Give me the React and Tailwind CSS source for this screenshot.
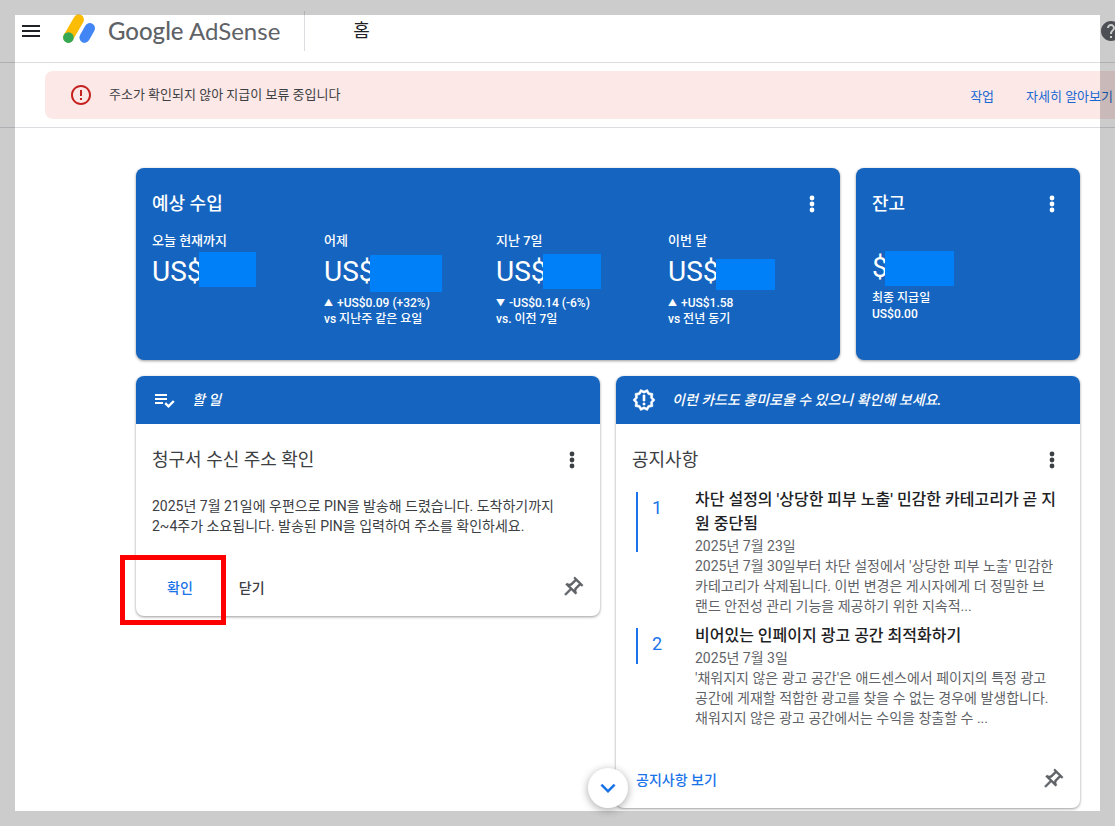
import React from 'react';
import { MdMenu, MdHelp, MdErrorOutline, MdExpandMore } from 'react-icons/md';

const earnings = [
  { label: '오늘 현재까지', mask: 'top-[-4px] left-[47px] w-[57px] h-[35px]' },
  {
    label: '어제',
    mask: 'top-[-1px] left-[46px] w-[72px] h-[37px]',
    arrow: '▲',
    change: '+US$0.09 (+32%)',
    compare: 'vs 지난주 같은 요일',
  },
  {
    label: '지난 7일',
    mask: 'top-[-2px] left-[47px] w-[58px] h-[35px]',
    arrow: '▼',
    change: '-US$0.14 (-6%)',
    compare: 'vs. 이전 7일',
  },
  {
    label: '이번 달',
    mask: 'top-[3px] left-[48px] w-[59px] h-[31px]',
    arrow: '▲',
    change: '+US$1.58',
    compare: 'vs 전년 동기',
  },
];

const notices = [
  {
    title: "차단 설정의 '상당한 피부 노출' 민감한 카테고리가 곧 지원 중단됨",
    date: '2025년 7월 23일',
    body: "2025년 7월 30일부터 차단 설정에서 '상당한 피부 노출' 민감한 카테고리가 삭제됩니다. 이번 변경은 게시자에게 더 정밀한 브랜드 안전성 관리 기능을 제공하기 위한 지속적...",
    bar: 'h-[60px]',
  },
  {
    title: '비어있는 인페이지 광고 공간 최적화하기',
    date: '2025년 7월 3일',
    body: "'채워지지 않은 광고 공간'은 애드센스에서 페이지의 특정 광고 공간에 게재할 적합한 광고를 찾을 수 없는 경우에 발생합니다. 채워지지 않은 광고 공간에서는 수익을 창출할 수 ...",
    bar: 'h-9',
  },
];

const AdSenseMark = () => (
  <svg width="34" height="34" viewBox="0 0 34 34" fill="none" aria-hidden="true">
    <path d="M15.7 5.6L5.4 23.4" stroke="#fbbc04" strokeWidth="10.4" strokeLinecap="round" />
    <path d="M26.8 14.2L21.6 23.6" stroke="#4285f4" strokeWidth="10.4" strokeLinecap="round" />
    <circle cx="5.4" cy="23.6" r="5.3" fill="#34a853" />
  </svg>
);

const ChecklistIcon = () => (
  <svg width="24" height="24" viewBox="0 0 24 24" fill="none" aria-hidden="true">
    <path d="M3 6h12v2H3zM3 10h12v2H3zM3 14h8v2H3z" fill="currentColor" />
    <path d="M13.2 15.2l3.3 3.2 5.3-5.4" stroke="currentColor" strokeWidth="2.4" />
  </svg>
);

const AlertBadgeIcon = () => (
  <svg width="24" height="24" viewBox="0 0 24 24" fill="currentColor" stroke="currentColor" strokeWidth="0.6" aria-hidden="true">
    <path d="M23 12l-2.44-2.78.34-3.68-3.61-.82-1.89-3.18L12 3 8.6 1.54 6.71 4.72l-3.61.81.34 3.68L1 12l2.44 2.78-.34 3.69 3.61.82 1.89 3.18L12 21l3.4 1.46 1.89-3.18 3.61-.82-.34-3.68L23 12zm-4.51 2.11l.26 2.79-2.74.62-1.43 2.41L12 18.82l-2.58 1.11-1.43-2.41-2.74-.62.26-2.8L3.66 12l1.85-2.12-.26-2.78 2.74-.61 1.43-2.41L12 5.18l2.58-1.11 1.43 2.41 2.74.62-.26 2.79L20.34 12l-1.85 2.11zM11 15h2v2h-2zM11 7h2v6h-2z" />
  </svg>
);

const MoreButton = () => (
  <button type="button" aria-label="더보기" className="flex h-6 w-6 items-center justify-center">
    <svg width="24" height="24" viewBox="0 0 24 24" fill="currentColor" aria-hidden="true">
      <circle cx="12" cy="6" r="2.4" />
      <circle cx="12" cy="12" r="2.4" />
      <circle cx="12" cy="18" r="2.4" />
    </svg>
  </button>
);

const PinButton = () => (
  <button type="button" aria-label="고정" className="flex h-6 w-6 items-center justify-center text-[#5f6368]">
    <svg width="24" height="24" viewBox="0 0 24 24" fill="currentColor" stroke="currentColor" strokeWidth="0.5" aria-hidden="true">
      <path
        transform="rotate(45 12 12)"
        d="M14 4v5c0 1.12.37 2.16 1 3H9c.65-.86 1-1.9 1-3V4h4m3-2H7c-.55 0-1 .45-1 1s.45 1 1 1h1v5c0 1.66-1.34 3-3 3v2h5.97v7l1 1 1-1v-7H19v-2c-1.66 0-3-1.34-3-3V4h1c.55 0 1-.45 1-1s-.45-1-1-1z"
      />
    </svg>
  </button>
);

const CardBanner = ({ icon, children }) => (
  <div className="flex h-12 items-center gap-4 bg-[#1565c0] px-4 text-white">
    {icon}
    <span className="text-sm font-medium italic">{children}</span>
  </div>
);

const Header = () => (
  <header className="flex h-[63px] items-center border-b border-[#dadce0] pl-[19px]">
    <button type="button" aria-label="메뉴" className="text-[#202124]">
      <MdMenu size={24} />
    </button>
    <a href="#home" className="ml-5 flex items-center gap-[11px] text-[#5f6368]">
      <AdSenseMark />
      <span className="font-[Lato,sans-serif] text-2xl whitespace-nowrap">
        <span className="font-medium">Google</span> AdSense
      </span>
    </a>
    <div className="ml-6 h-10 w-px bg-[#dadce0]" />
    <h1 className="ml-12 text-lg text-[#202124]">홈</h1>
    <button type="button" aria-label="도움말" className="-mr-2 ml-auto text-[#5f6368]">
      <MdHelp size={24} />
    </button>
  </header>
);

const PaymentAlert = () => (
  <section className="border-b border-[#dadce0] py-2 pl-[45px]">
    <div className="flex h-12 items-center rounded-l-lg bg-[#fce8e6] pl-6 text-[13px]">
      <MdErrorOutline size={24} className="text-[#c5221f]" />
      <p className="ml-4 text-[#3c4043]">주소가 확인되지 않아 지급이 보류 중입니다</p>
      <div className="ml-auto flex gap-8 pt-1 pr-0.5 text-[#1967d2]">
        <a href="#action">작업</a>
        <a href="#learn">자세히 알아보기</a>
      </div>
    </div>
  </section>
);

const EarningsCard = () => (
  <section className="col-span-3 h-48 rounded-lg bg-[#1565c0] p-4 text-white shadow-[0_1px_3px_rgba(0,0,0,0.4)]">
    <div className="flex h-10 items-center justify-between">
      <h2 className="text-lg font-medium">예상 수입</h2>
      <MoreButton />
    </div>
    <div className="mt-2 grid grid-cols-[repeat(4,172px)]">
      {earnings.map((item) => (
        <div key={item.label} className="font-medium">
          <p className="text-[13px] leading-[18px]">{item.label}</p>
          <p className="relative mt-1.5 text-[28px] leading-8 font-normal">
            US$
            <span className={`absolute bg-[#0080f8] ${item.mask}`} />
          </p>
          {item.change && (
            <div className="mt-[7px] text-xs leading-4">
              <p className="flex gap-1">
                <span className="text-[9px]">{item.arrow}</span>
                {item.change}
              </p>
              <p>{item.compare}</p>
            </div>
          )}
        </div>
      ))}
    </div>
  </section>
);

const BalanceCard = () => (
  <section className="h-48 rounded-lg bg-[#1565c0] p-4 text-white shadow-[0_1px_3px_rgba(0,0,0,0.4)]">
    <div className="flex h-10 items-center justify-between">
      <h2 className="text-lg font-medium">잔고</h2>
      <MoreButton />
    </div>
    <p className="relative mt-7 text-[28px] leading-8">
      $
      <span className="absolute top-[-1px] left-[13px] h-[35px] w-[69px] bg-[#0080f8]" />
    </p>
    <div className="mt-1.5 text-xs leading-4 font-medium">
      <p>최종 지급일</p>
      <p>US$0.00</p>
    </div>
  </section>
);

const TodoCard = () => (
  <div className="relative col-span-2 self-start">
    <section className="overflow-hidden rounded-lg bg-white shadow-[0_1px_3px_rgba(0,0,0,0.4)]">
      <CardBanner icon={<ChecklistIcon />}>할 일</CardBanner>
      <div className="px-4 pt-4">
        <div className="flex h-10 items-center justify-between text-[#3c4043]">
          <h2 className="text-lg">청구서 수신 주소 확인</h2>
          <MoreButton />
        </div>
        <p className="mt-4 pr-4 text-sm leading-5 text-[#3c4043]">
          2025년 7월 21일에 우편으로 PIN을 발송해 드렸습니다. 도착하기까지 2~4주가 소요됩니다. 발송된 PIN을 입력하여 주소를 확인하세요.
        </p>
        <div className="mt-6 flex h-14 items-center text-sm font-medium">
          <button type="button" className="px-[15px] text-[#1a73e8]">확인</button>
          <button type="button" className="ml-4 px-[15px] text-[#3c4043]">닫기</button>
          <div className="ml-auto"><PinButton /></div>
        </div>
      </div>
    </section>
    <div className="pointer-events-none absolute -bottom-[9px] -left-4 h-[70px] w-[106px] border-[5px] border-[#ff0000]" />
  </div>
);

const NoticesCard = () => (
  <div className="relative col-span-2">
    <section className="overflow-hidden rounded-lg bg-white shadow-[0_1px_3px_rgba(0,0,0,0.4)]">
      <CardBanner icon={<AlertBadgeIcon />}>이런 카드도 흥미로울 수 있으니 확인해 보세요.</CardBanner>
      <div className="px-4 pt-4">
        <div className="flex h-10 items-center justify-between text-[#3c4043]">
          <h2 className="text-lg">공지사항</h2>
          <MoreButton />
        </div>
        <ol className="mt-2 space-y-2 pl-1">
          {notices.map((notice, i) => (
            <li key={notice.date} className="flex">
              <div className={`mt-1 w-[59px] shrink-0 border-l-2 border-[#1a73e8] pt-1 pl-3.5 text-lg leading-6 text-[#1a73e8] ${notice.bar}`}>
                {i + 1}
              </div>
              <div className="text-sm leading-5 text-[#5f6368]">
                <h3 className="text-base leading-6 font-medium text-[#202124]">{notice.title}</h3>
                <p>{notice.date}</p>
                <p className="pr-2">{notice.body}</p>
              </div>
            </li>
          ))}
        </ol>
        <div className="mt-6 flex h-14 items-center justify-between pl-1">
          <a href="#notices" className="text-sm font-medium text-[#1a73e8]">공지사항 보기</a>
          <PinButton />
        </div>
      </div>
    </section>
    <button
      type="button"
      aria-label="아래로"
      className="absolute bottom-0 -left-7 flex h-10 w-10 items-center justify-center rounded-full bg-white text-[#1a73e8] shadow-[0_2px_8px_rgba(0,0,0,0.35)]"
    >
      <MdExpandMore size={30} />
    </button>
  </div>
);

const App = () => (
  <div className="relative min-h-screen overflow-hidden bg-white font-[Roboto,'Noto_Sans_CJK_KR',sans-serif]">
    <Header />
    <PaymentAlert />
    <main className="grid grid-cols-4 gap-4 pt-10 pr-[35px] pl-[136px]">
      <EarningsCard />
      <BalanceCard />
      <TodoCard />
      <NoticesCard />
    </main>
    <div className="pointer-events-none absolute inset-0 border-[15px] border-black/20" />
  </div>
);

export default App;
